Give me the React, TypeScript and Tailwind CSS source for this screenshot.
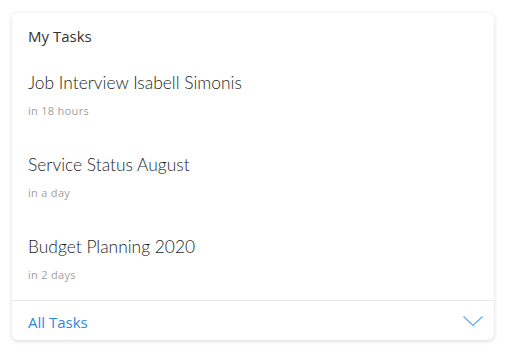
const tasks = [
  { title: 'Job Interview Isabell Simonis', due: 'in 18 hours' },
  { title: 'Service Status August', due: 'in a day' },
  { title: 'Budget Planning 2020', due: 'in 2 days' },
]

export default function App() {
  return (
    <div className="min-h-screen bg-white pt-[13px] px-[12px] font-['Open_Sans','Noto_Sans',sans-serif]">
      <div className="w-[482px] rounded-[6px] bg-white shadow-[0_1px_4px_rgba(0,0,0,0.16)]">
        <div className="px-[16px] pt-[13px] pb-[13px] text-[15px] leading-[20px] text-[#323130]">My Tasks</div>
        <ul>
          {tasks.map((task, i) => (
            <li
              key={task.title}
              className={`px-[16px] pt-[12px] ${i === tasks.length - 1 ? 'pb-[17px]' : 'pb-[22px]'}`}
            >
              <p className="font-['Lato','Open_Sans',sans-serif] text-[17.4px] font-light leading-[24px] text-[#201f1e]">
                {task.title}
              </p>
              <p className="mt-[8px] text-[11px] leading-[16px] tracking-[0.3px] text-[#a19f9d]">{task.due}</p>
            </li>
          ))}
        </ul>
        <div className="flex h-[40px] items-start justify-between border-t border-[#e8e8e8] pl-[16px] pr-[11px]">
          <a href="#" className="pt-[11px] text-[15px] leading-[20px] text-[#2a8ae6]">
            All Tasks
          </a>
          <svg width="20" height="11" viewBox="0 0 20 11" className="mt-[15px]" fill="none">
            <path d="M0.5 0.5 L10 9.5 L19.5 0.5" stroke="#5aa6ee" strokeWidth="1.1" />
          </svg>
        </div>
      </div>
    </div>
  )
}
